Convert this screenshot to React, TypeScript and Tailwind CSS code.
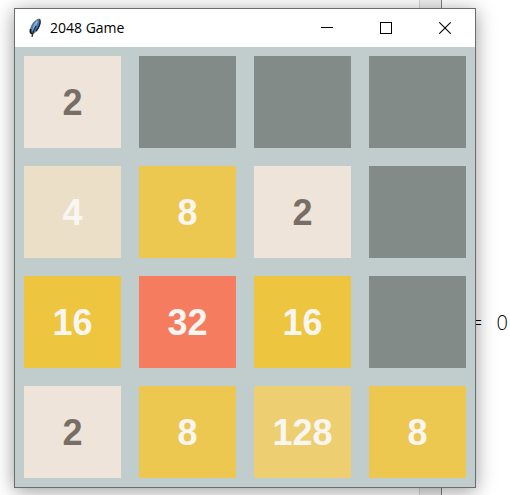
type Tile = { value: number; bg: string; fg: string };

const EMPTY: Tile = { value: 0, bg: "bg-[#838b89]", fg: "" };
const T2: Tile = { value: 2, bg: "bg-[#eee4da]", fg: "text-[#776e65]" };
const T4: Tile = { value: 4, bg: "bg-[#ebdfc8]", fg: "text-[#f9f6f2]" };
const T8: Tile = { value: 8, bg: "bg-[#ecc850]", fg: "text-[#f9f6f2]" };
const T16: Tile = { value: 16, bg: "bg-[#edc53f]", fg: "text-[#f9f6f2]" };
const T32: Tile = { value: 32, bg: "bg-[#f67c5f]", fg: "text-[#f9f6f2]" };
const T128: Tile = { value: 128, bg: "bg-[#edcf72]", fg: "text-[#f9f6f2]" };

const BOARD: Tile[] = [
  T2, EMPTY, EMPTY, EMPTY,
  T4, T8, T2, EMPTY,
  T16, T32, T16, EMPTY,
  T2, T8, T128, T8,
];

function Feather() {
  return (
    <svg viewBox="0 0 14 20" className="h-5 w-[14px]" aria-hidden="true">
      <path d="M11.500 1C8 1.500 4.500 5 3 9.500L2 13.500l1.500 2.500 3.500-1.500c2.500-2 4-5 5-9.500z" fill="#4779b5" stroke="#6b6661" strokeWidth="1" />
      <path d="M9.500 3C7 6 5.500 9 5 13" fill="none" stroke="#7db0ea" strokeWidth="2" />
      <path d="M12 1.500c.5 3-1 8-4 11.500M8 8c-2 3-3.500 6-4 11" fill="none" stroke="#24262a" strokeWidth="1.300" />
      <path d="M2.500 11v3.500l1.500 1.500" fill="none" stroke="#111" strokeWidth="1.600" />
    </svg>
  );
}

function TitleBar() {
  const button = "flex w-[59px] items-center justify-center hover:bg-gray-200";
  return (
    <header className="flex h-[38px] shrink-0 bg-white pr-px text-black">
      <div className="flex flex-1 items-center gap-2 pl-[13px]">
        <Feather />
        <h1 className="font-['Open_Sans','Noto_Sans',sans-serif] text-sm leading-5">2048 Game</h1>
      </div>
      <button type="button" aria-label="Minimize" className={button}>
        <svg viewBox="0 0 12 12" className="size-3" shapeRendering="crispEdges"><path d="M0 5.500h12" stroke="#000" /></svg>
      </button>
      <button type="button" aria-label="Maximize" className={button}>
        <svg viewBox="0 0 12 12" className="size-3" shapeRendering="crispEdges"><path d="M.5.5h11v11H.5z" fill="none" stroke="#000" /></svg>
      </button>
      <button type="button" aria-label="Close" className={button}>
        <svg viewBox="0 0 12 12" className="size-3"><path d="M.3.3l11.400 11.400M11.700.3L.3 11.700" stroke="#000" strokeWidth="1.100" /></svg>
      </button>
    </header>
  );
}

export default function App() {
  return (
    <div className="relative flex h-screen overflow-hidden bg-white">
      <div className="flex-1 bg-white" />
      <div className="w-[23px] border-x border-l-[#d4d4d4] border-r-[#808080] bg-[#f0f0f0]" />
      <div className="flex w-[68px] items-start justify-end pt-[311px] pr-[2px]">
        <p className="font-['Open_Sans','Noto_Sans',sans-serif] text-xl leading-6 font-light whitespace-pre text-black">
          =  <span className="ml-1">0</span>
        </p>
      </div>

      <main className="absolute top-2 right-[34px] bottom-[7px] left-[14px] flex flex-col border border-[#6b6d6d] bg-[#c1cdcd] shadow-[0_3px_18px_rgba(0,0,0,0.4)]">
        <TitleBar />
        <section aria-label="Board" className="grid flex-1 grid-cols-4 grid-rows-4 gap-[18px] p-[9px]">
          {BOARD.map((tile, i) => (
            <div
              key={i}
              className={`flex items-center justify-center pt-0.5 font-['Liberation_Sans',Arial,sans-serif] text-4xl font-bold ${tile.bg} ${tile.fg}`}
            >
              {tile.value > 0 ? tile.value : null}
            </div>
          ))}
        </section>
      </main>
    </div>
  );
}
